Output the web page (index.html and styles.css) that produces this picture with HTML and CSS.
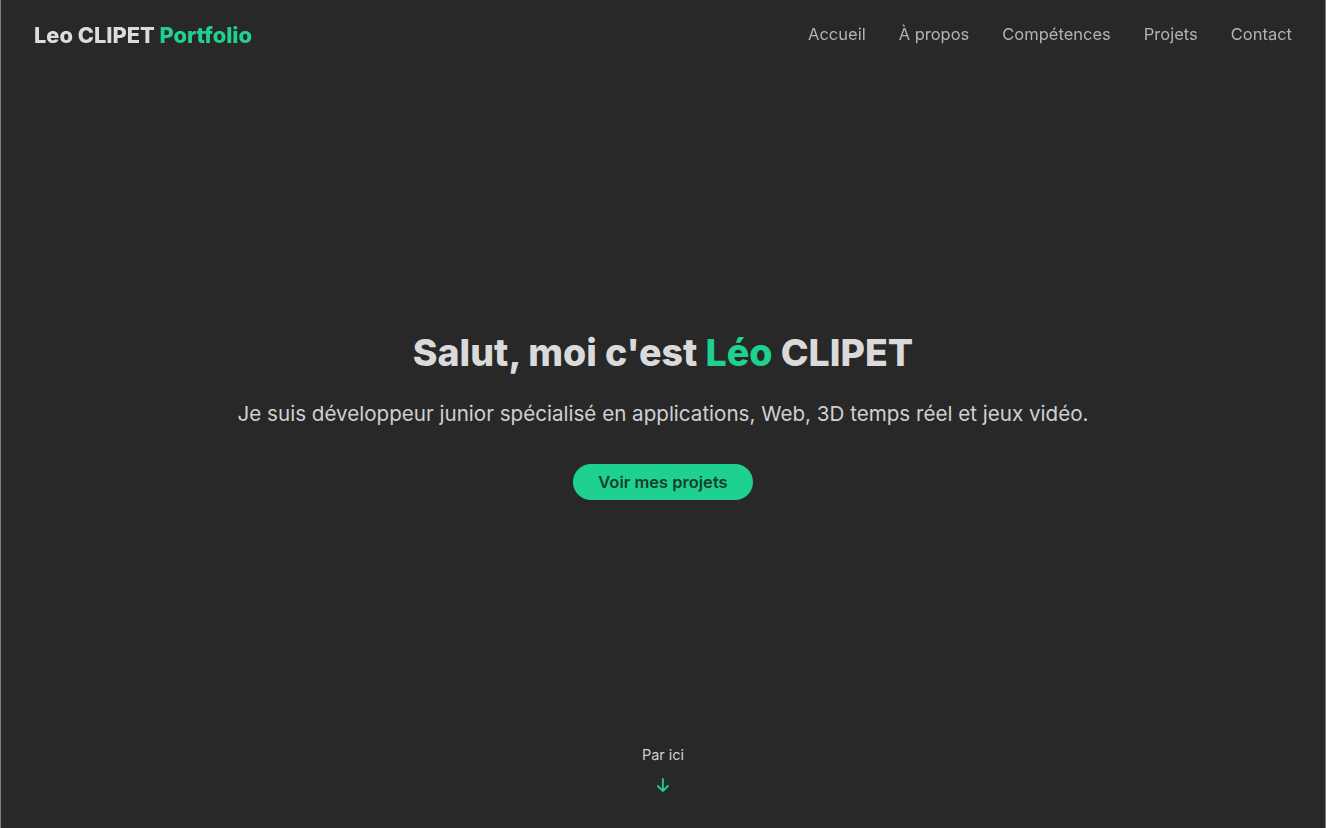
FILE: index.html
```html
<!DOCTYPE html>
<html lang="fr">
<head>
<meta charset="utf-8">
<title>Leo CLIPET Portfolio</title>
<link rel="stylesheet" href="styles.css">
</head>
<body>
<header class="topbar">
  <a class="brand" href="#">Leo CLIPET <span class="accent">Portfolio</span></a>
  <nav class="nav">
    <a href="#">Accueil</a>
    <a href="#">À propos</a>
    <a href="#">Compétences</a>
    <a href="#">Projets</a>
    <a href="#">Contact</a>
  </nav>
</header>
<main class="hero">
  <div class="hero-content">
    <h1 class="hero-title">Salut, moi c'est <span class="accent">Léo</span> CLIPET</h1>
    <p class="hero-sub">Je suis développeur junior spécialisé en applications, Web, 3D temps réel et jeux vidéo.</p>
    <a class="btn" href="#">Voir mes projets</a>
  </div>
  <a class="scroll-hint" href="#">
    <span>Par ici</span>
    <svg width="16" height="16" viewBox="0 0 16 16" fill="none" stroke="currentColor" stroke-width="1.8" stroke-linecap="round" stroke-linejoin="round"><path d="M8 2v12M3 9l5 5 5-5"/></svg>
  </a>
</main>
</body>
</html>
```
FILE: styles.css
```css
* { box-sizing: border-box; }
html, body { margin: 0; padding: 0; }
body {
  background: #282828;
  color: #d6d6d6;
  font-family: Inter, "Noto Sans", sans-serif;
  height: 828px;
  overflow: hidden;
  border-left: 1px solid #7c7c7c;
  border-right: 1px solid #7c7c7c;
}
a { text-decoration: none; color: inherit; }
.accent { color: #1fd18f; }
.topbar {
  position: fixed;
  top: 0; left: 0; right: 0;
  height: 70px;
  padding: 0 34px;
  display: flex;
  align-items: center;
  justify-content: space-between;
  z-index: 2;
}
.brand {
  font-weight: 800;
  font-size: 21.8px;
  color: #dcdcdc;
}
.nav { display: flex; gap: 33px; margin-top: -2px; }
.nav a { font-size: 16.5px; color: #b3b3b3; }
.hero {
  height: 828px;
  display: flex;
  flex-direction: column;
  align-items: center;
  justify-content: center;
  position: relative;
}
.hero-content {
  display: flex;
  flex-direction: column;
  align-items: center;
  text-align: center;
  padding-top: 2px;
}
.hero-title {
  margin: 0;
  font-size: 37.5px;
  line-height: 46px;
  font-weight: 800;
  color: #dadada;
}
.hero-sub {
  margin: 25px 0 0;
  font-size: 20.6px;
  line-height: 26px;
  color: #d0d0d0;
}
.btn {
  margin-top: 37px;
  width: 180px;
  height: 36px;
  border-radius: 18px;
  background: #1fd18f;
  color: #15402d;
  font-weight: 600;
  font-size: 16.5px;
  display: flex;
  align-items: center;
  justify-content: center;
}
.scroll-hint {
  position: absolute;
  bottom: 35px;
  left: 50%;
  transform: translateX(-50%);
  display: flex;
  flex-direction: column;
  align-items: center;
  gap: 14px;
  font-size: 14.5px;
  color: #cfcfcf;
}
.scroll-hint svg { color: #1fd18f; }
```
